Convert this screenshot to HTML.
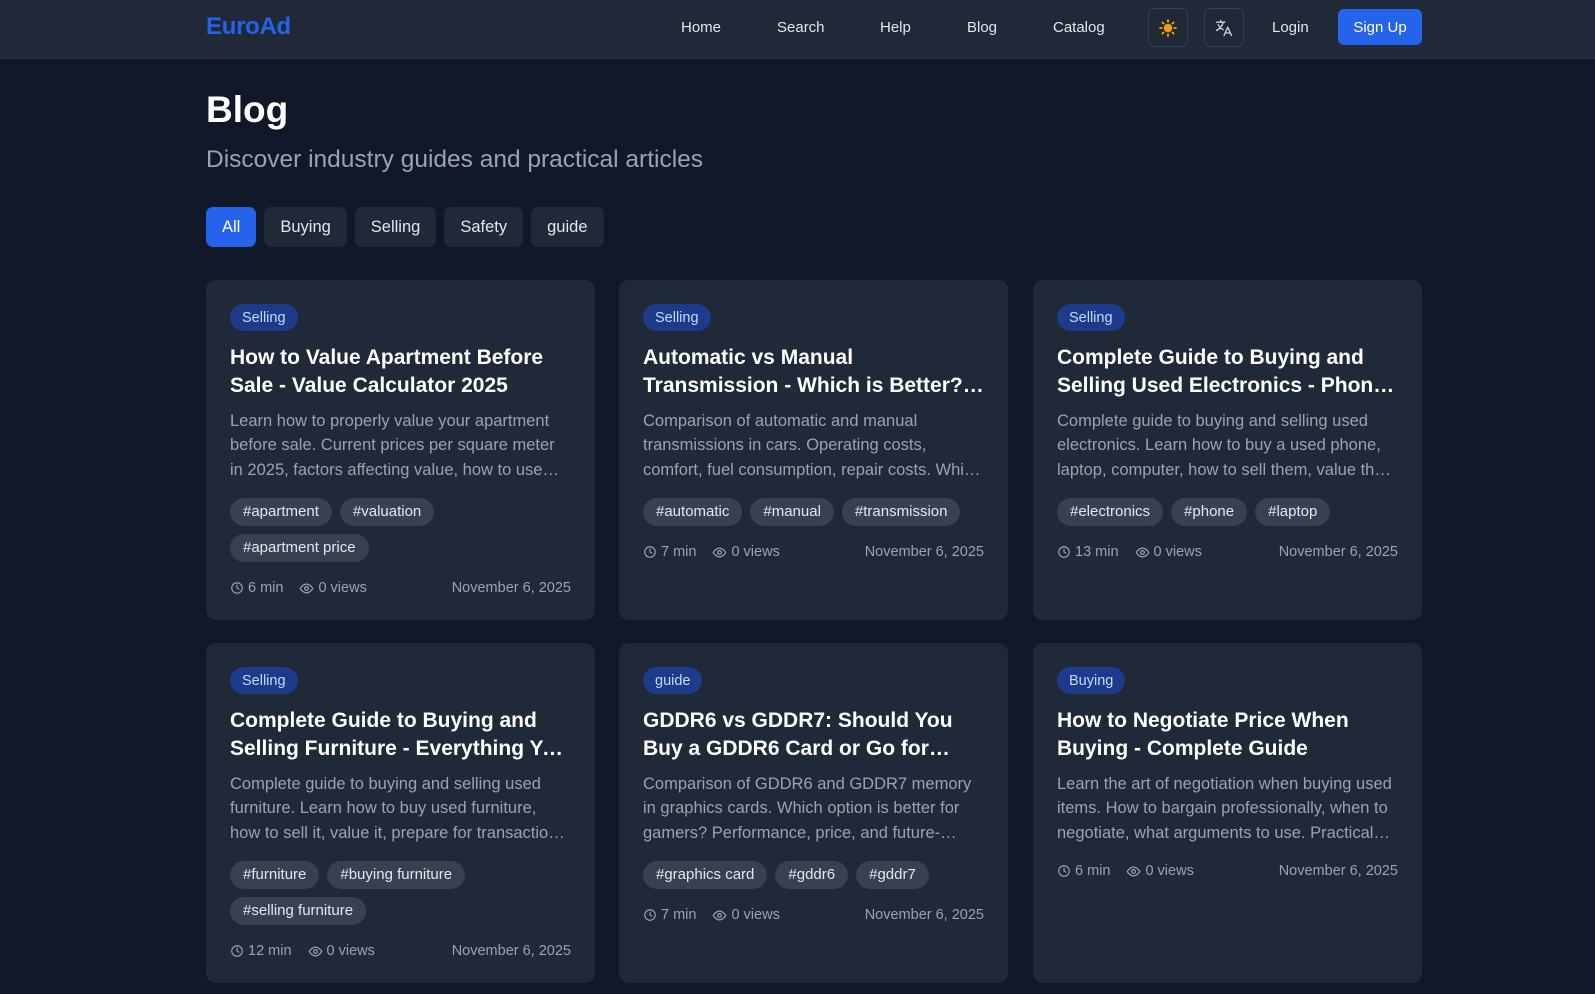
<!DOCTYPE html>
<html><head><meta charset="utf-8"><style>
*{box-sizing:border-box;margin:0;padding:0}
body{width:1595px;height:994px;overflow:hidden;background:#111827;font-family:"Liberation Sans",sans-serif;color:#fff}
.hdr{height:59px;background:#1f2937;border-bottom:1px solid #2b3544;position:relative}
.logo{position:absolute;left:206px;top:13px;font-size:24px;font-weight:bold;color:#2563eb;letter-spacing:-0.3px}
.nav a{position:absolute;top:19px;font-size:15px;color:#e5e7eb}
.ib{position:absolute;top:8px;width:40px;height:39px;border:1px solid #374151;border-radius:7px;display:flex;align-items:center;justify-content:center}
.su{position:absolute;left:1338px;top:9px;width:84px;height:36px;background:#2563eb;border-radius:6px;font-size:15px;display:flex;align-items:center;justify-content:center}
h1{position:absolute;left:206px;top:89px;font-size:37px;font-weight:bold}
.sub{position:absolute;left:206px;top:146px;font-size:24.5px;color:#9ca3af}
.filters{position:absolute;left:206px;top:207px;display:flex;gap:8px}
.filters span{height:40px;padding:0 16px;background:#1f2937;border-radius:7px;font-size:16.5px;color:#e5e7eb;display:flex;align-items:center}
.filters span.on{background:#2563eb;color:#fff}
.card{position:absolute;width:389px;height:340px;background:#1f2937;border-radius:10px;padding:24px 24px}
.badge{display:inline-block;height:27px;line-height:28px;padding:0 12px;background:#1e3a8a;color:#bfdbfe;border-radius:14px;font-size:14.5px}
.t{margin-top:13px;font-size:21px;font-weight:bold;line-height:28px;height:56px;overflow:hidden;display:-webkit-box;-webkit-line-clamp:2;-webkit-box-orient:vertical}
.d{margin-top:9px;font-size:16.5px;line-height:24.4px;color:#9ca3af;display:-webkit-box;-webkit-line-clamp:3;-webkit-box-orient:vertical;overflow:hidden;height:73px}
.tags{margin-top:16px;display:flex;flex-wrap:wrap;gap:8px}
.tags span{height:28px;line-height:28px;padding:0 13px;background:#374151;border-radius:14px;font-size:15px;color:#e5e7eb}
.meta{margin-top:16px;display:flex;font-size:14.5px;color:#9ca3af;align-items:center;height:20px}
.meta .m{display:flex;align-items:center;gap:4px;margin-right:16px}
.meta .dt{margin-left:auto}
</style></head><body>
<div class="hdr">
<div class="logo">EuroAd</div>
<div class="nav"><a style="left:681px">Home</a><a style="left:777px">Search</a><a style="left:880px">Help</a><a style="left:967px">Blog</a><a style="left:1053px">Catalog</a></div>
<div class="ib" style="left:1148px"><svg width="18" height="18" viewBox="0 0 24 24" fill="none" stroke="#f59e0b" stroke-width="2.5" stroke-linecap="round"><circle cx="12" cy="12" r="4.5" fill="#f59e0b"/><path d="M12 1.5v2M12 20.5v2M1.5 12h2M20.5 12h2M4.6 4.6l1.4 1.4M18 18l1.4 1.4M4.6 19.4L6 18M18 6l1.4-1.4"/></svg></div>
<div class="ib" style="left:1204px"><svg width="20" height="20" viewBox="0 0 24 24" fill="none" stroke="#d1d5db" stroke-width="1.6" stroke-linecap="round" stroke-linejoin="round"><path d="M3 5h10M8 3v2M5 8c1.5 3 4 5 6 6M11 5c-1 4-4 8-8 10M12 21l4.5-10L21 21M13.5 18h6"/></svg></div>
<div class="nav"><a style="left:1272px">Login</a></div>
<div class="su">Sign Up</div>
</div>
<h1>Blog</h1>
<div class="sub">Discover industry guides and practical articles</div>
<div class="filters"><span class="on">All</span><span>Buying</span><span>Selling</span><span>Safety</span><span>guide</span></div>

<svg width="0" height="0" style="position:absolute"><defs>
<symbol id="clk" viewBox="0 0 24 24"><circle cx="12" cy="12" r="9" fill="none" stroke="#9ca3af" stroke-width="2"/><path d="M12 7v5l3 2" fill="none" stroke="#9ca3af" stroke-width="2" stroke-linecap="round"/></symbol>
<symbol id="eye" viewBox="0 0 24 24"><path d="M2 12s4-7 10-7 10 7 10 7-4 7-10 7S2 12 2 12z" fill="none" stroke="#9ca3af" stroke-width="2"/><circle cx="12" cy="12" r="3" fill="none" stroke="#9ca3af" stroke-width="2"/></symbol>
</defs></svg>

<div class="card" style="left:206px;top:280px"><span class="badge">Selling</span><div class="t">How to Value Apartment Before Sale - Value Calculator 2025</div><div class="d">Learn how to properly value your apartment before sale. Current prices per square meter in 2025, factors affecting value, how to use calculators and more.</div><div class="tags"><span>#apartment</span><span>#valuation</span><span style="margin-right:60px">#apartment price</span></div><div class="meta"><span class="m"><svg width="14" height="14"><use href="#clk"/></svg>6 min</span><span class="m"><svg width="15" height="15"><use href="#eye"/></svg>0 views</span><span class="dt">November 6, 2025</span></div></div>

<div class="card" style="left:619px;top:280px"><span class="badge">Selling</span><div class="t">Automatic vs Manual Transmission - Which is Better? Complete Comparison</div><div class="d">Comparison of automatic and manual transmissions in cars. Operating costs, comfort, fuel consumption, repair costs. Which to choose and why.</div><div class="tags"><span>#automatic</span><span>#manual</span><span>#transmission</span></div><div class="meta"><span class="m"><svg width="14" height="14"><use href="#clk"/></svg>7 min</span><span class="m"><svg width="15" height="15"><use href="#eye"/></svg>0 views</span><span class="dt">November 6, 2025</span></div></div>

<div class="card" style="left:1033px;top:280px"><span class="badge">Selling</span><div class="t">Complete Guide to Buying and Selling Used Electronics - Phone, Laptop</div><div class="d">Complete guide to buying and selling used electronics. Learn how to buy a used phone, laptop, computer, how to sell them, value them and more.</div><div class="tags"><span>#electronics</span><span>#phone</span><span>#laptop</span></div><div class="meta"><span class="m"><svg width="14" height="14"><use href="#clk"/></svg>13 min</span><span class="m"><svg width="15" height="15"><use href="#eye"/></svg>0 views</span><span class="dt">November 6, 2025</span></div></div>

<div class="card" style="left:206px;top:643px"><span class="badge">Selling</span><div class="t">Complete Guide to Buying and Selling Furniture - Everything You Need</div><div class="d">Complete guide to buying and selling used furniture. Learn how to buy used furniture, how to sell it, value it, prepare for transaction and more.</div><div class="tags"><span>#furniture</span><span>#buying furniture</span><span>#selling furniture</span></div><div class="meta"><span class="m"><svg width="14" height="14"><use href="#clk"/></svg>12 min</span><span class="m"><svg width="15" height="15"><use href="#eye"/></svg>0 views</span><span class="dt">November 6, 2025</span></div></div>

<div class="card" style="left:619px;top:643px"><span class="badge">guide</span><div class="t">GDDR6 vs GDDR7: Should You Buy a GDDR6 Card or Go for GDDR7?</div><div class="d">Comparison of GDDR6 and GDDR7 memory in graphics cards. Which option is better for gamers? Performance, price, and future-proofing explained.</div><div class="tags"><span>#graphics card</span><span>#gddr6</span><span>#gddr7</span></div><div class="meta"><span class="m"><svg width="14" height="14"><use href="#clk"/></svg>7 min</span><span class="m"><svg width="15" height="15"><use href="#eye"/></svg>0 views</span><span class="dt">November 6, 2025</span></div></div>

<div class="card" style="left:1033px;top:643px"><span class="badge">Buying</span><div class="t">How to Negotiate Price When Buying - Complete Guide</div><div class="d">Learn the art of negotiation when buying used items. How to bargain professionally, when to negotiate, what arguments to use. Practical tips.</div><div class="meta" style="margin-top:16px"><span class="m"><svg width="14" height="14"><use href="#clk"/></svg>6 min</span><span class="m"><svg width="15" height="15"><use href="#eye"/></svg>0 views</span><span class="dt">November 6, 2025</span></div></div>
</body></html>
